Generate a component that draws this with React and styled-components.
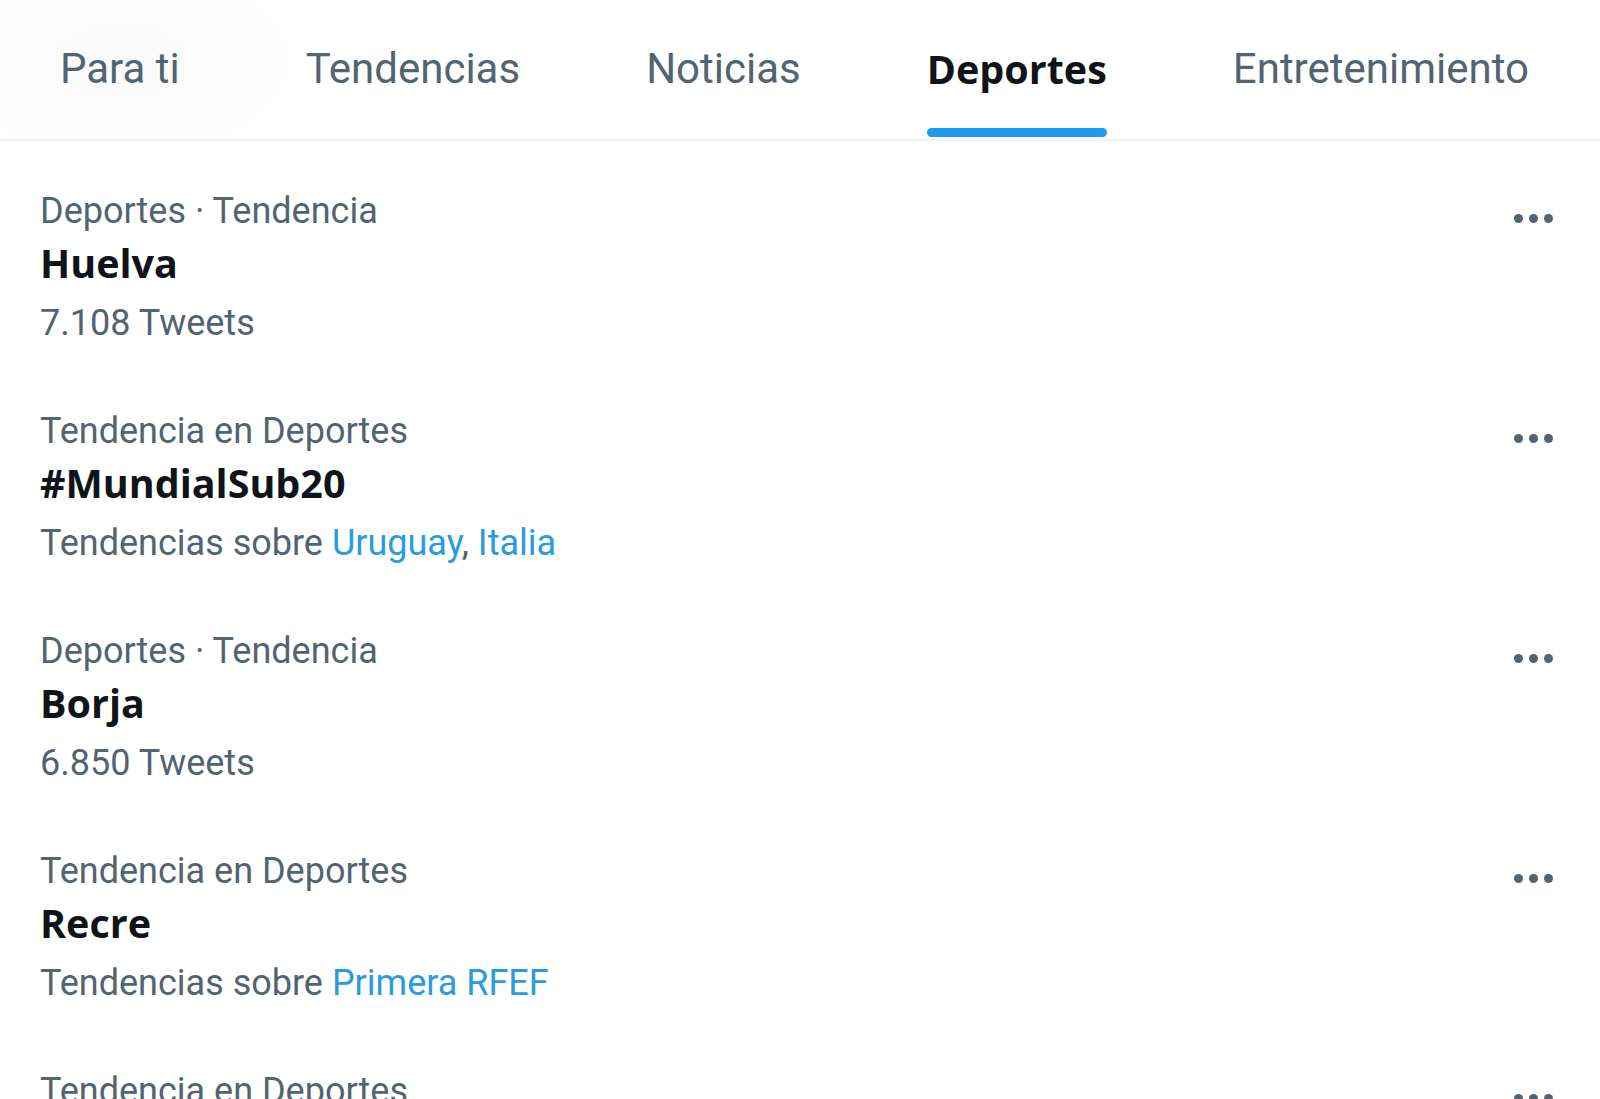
import React from 'react';
import styled, { createGlobalStyle } from 'styled-components';

const GlobalStyle = createGlobalStyle`
  html, body {
    margin: 0;
    padding: 0;
    background: #ffffff;
    overflow: hidden;
  }
  body {
    font-family: Roboto, "Liberation Sans", sans-serif;
    color: #0f1419;
  }
`;

const Page = styled.div`
  width: 1600px;
  height: 1099px;
  overflow: hidden;
  background: #fff;
`;

const TabBar = styled.nav`
  display: flex;
  gap: 126px;
  padding-left: 60px;
  height: 141px;
  border-bottom: 2px solid #eff3f4;
  box-sizing: border-box;
  background: radial-gradient(ellipse 260px 150px at 120px 60px, rgba(0, 0, 0, 0.025), rgba(0, 0, 0, 0) 70%);
`;

const Tab = styled.div`
  display: flex;
  flex-direction: column;
  height: 100%;
  cursor: pointer;
`;

const TabLabel = styled.span`
  padding-top: 45px;
  line-height: 48px;
  white-space: nowrap;
  font-family: ${p => p.active ? '"Open Sans", Roboto, sans-serif' : 'Roboto, sans-serif'};
  font-size: ${p => p.active ? '39.5px' : '42px'};
  font-weight: ${p => p.active ? 700 : 400};
  color: ${p => p.active ? '#0f1419' : '#536471'};
`;

const TabLine = styled.div`
  margin-top: auto;
  margin-bottom: 2px;
  height: 9px;
  border-radius: 9999px;
  background: ${p => p.active ? '#1d9bf0' : 'transparent'};
`;

const List = styled.div`
  padding-top: 16px;
`;

const Row = styled.div`
  display: flex;
  align-items: flex-start;
  padding: 32px 47px 32px 40px;
`;

const Body = styled.div`
  flex: 1;
  display: flex;
  flex-direction: column;
`;

const Meta = styled.div`
  font-size: 36px;
  line-height: 44px;
  color: #536471;
  white-space: nowrap;
`;

const Title = styled.div`
  font-family: "Open Sans", Roboto, sans-serif;
  font-weight: 700;
  font-size: 39.5px;
  line-height: 60px;
  color: #0f1419;
`;

const Sub = styled.div`
  margin-top: 8px;
  font-size: 36px;
  line-height: 44px;
  color: #536471;
  white-space: nowrap;
`;

const Topic = styled.span`
  color: #2a9be0;
`;

const MoreButton = styled.div`
  display: flex;
  gap: 6px;
  margin-top: 25px;
  cursor: pointer;
`;

const Dot = styled.span`
  width: 9px;
  height: 9px;
  border-radius: 50%;
  background: #536471;
`;

const tabs = ['Para ti', 'Tendencias', 'Noticias', 'Deportes', 'Entretenimiento'];

const trends = [
  { meta: 'Deportes · Tendencia', title: 'Huelva', count: '7.108 Tweets' },
  { meta: 'Tendencia en Deportes', title: '#MundialSub20', topics: ['Uruguay', 'Italia'] },
  { meta: 'Deportes · Tendencia', title: 'Borja', count: '6.850 Tweets' },
  { meta: 'Tendencia en Deportes', title: 'Recre', topics: ['Primera RFEF'] },
  { meta: 'Tendencia en Deportes', title: 'Nico Williams', count: '2.431 Tweets' },
];

const App = () => {
  return (
    <>
      <GlobalStyle />
      <Page>
        <TabBar>
          {tabs.map(t => (
            <Tab key={t}>
              <TabLabel active={t === 'Deportes'}>{t}</TabLabel>
              <TabLine active={t === 'Deportes'} />
            </Tab>
          ))}
        </TabBar>
        <List>
          {trends.map((tr, i) => (
            <Row key={i}>
              <Body>
                <Meta>{tr.meta}</Meta>
                <Title>{tr.title}</Title>
                {tr.count ? (
                  <Sub>{tr.count}</Sub>
                ) : (
                  <Sub>
                    Tendencias sobre{' '}
                    {tr.topics.map((tp, j) => (
                      <React.Fragment key={tp}>
                        {j > 0 && ', '}
                        <Topic>{tp}</Topic>
                      </React.Fragment>
                    ))}
                  </Sub>
                )}
              </Body>
              <MoreButton>
                <Dot />
                <Dot />
                <Dot />
              </MoreButton>
            </Row>
          ))}
        </List>
      </Page>
    </>
  );
};

export default App;
